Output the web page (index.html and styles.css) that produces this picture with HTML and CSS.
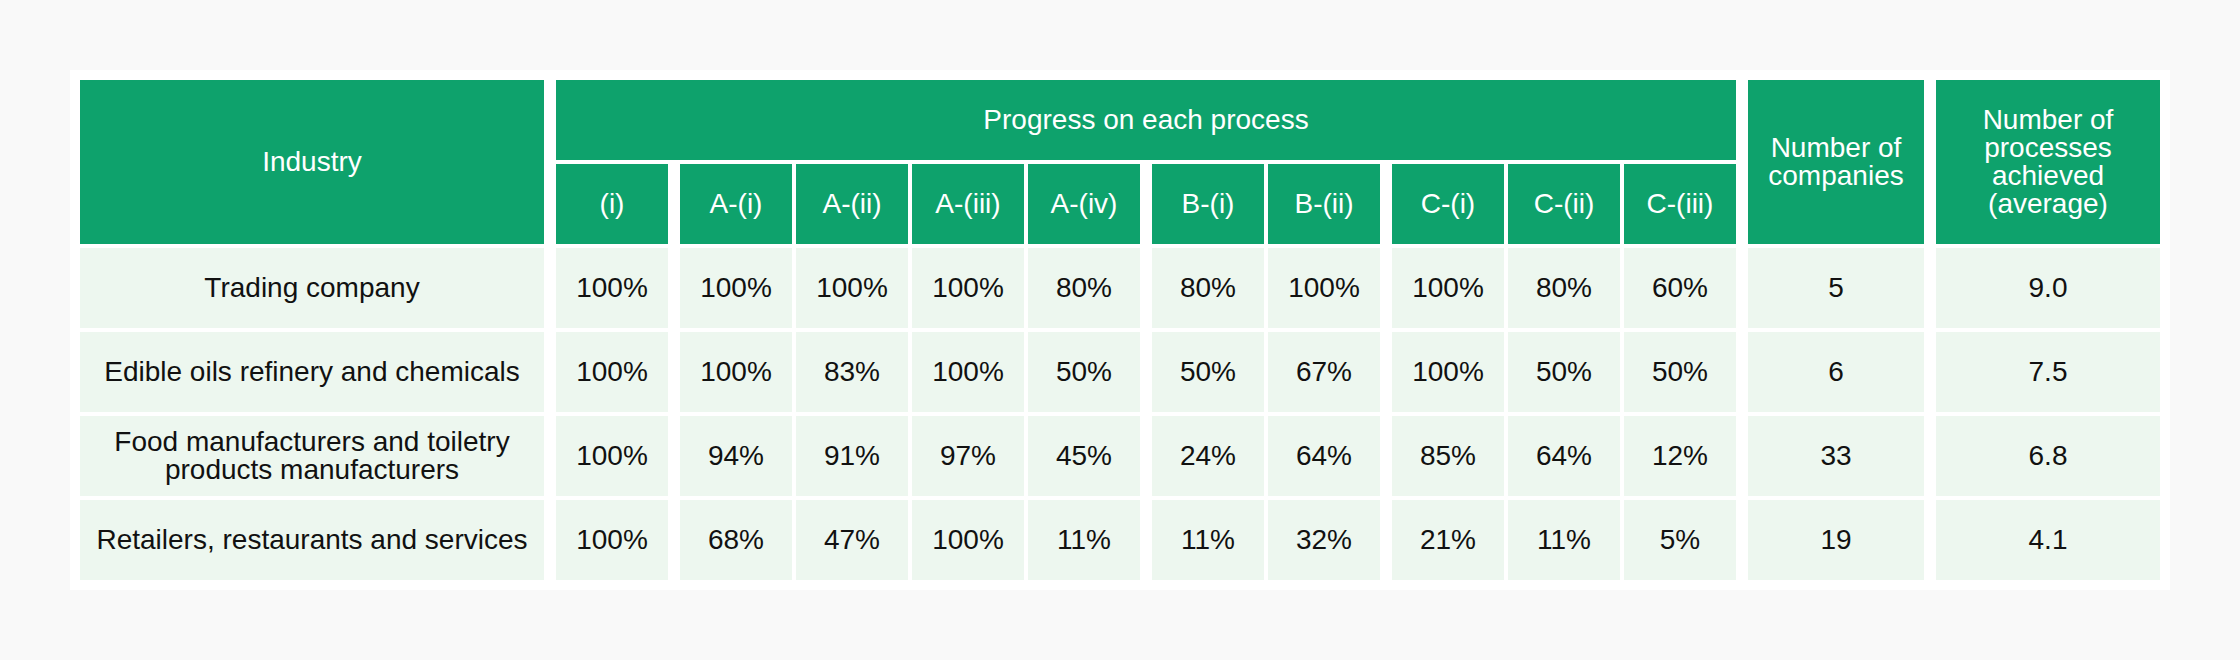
FILE: index.html
```html
<!DOCTYPE html>
<html lang="en">
<head>
<meta charset="utf-8">
<title>Progress on each process</title>
<link rel="stylesheet" href="styles.css">
</head>
<body>
<div class="panel">
  <div class="grid">
    <div class="cell head tall">Industry</div>
    <div class="cell head gs span-proc">Progress on each process</div>
    <div class="cell head gs tall">Number of<br>companies</div>
    <div class="cell head gs tall">Number of<br>processes<br>achieved<br>(average)</div>

    <div class="cell head gs">(i)</div>
    <div class="cell head gs">A-(i)</div>
    <div class="cell head">A-(ii)</div>
    <div class="cell head">A-(iii)</div>
    <div class="cell head">A-(iv)</div>
    <div class="cell head gs">B-(i)</div>
    <div class="cell head">B-(ii)</div>
    <div class="cell head gs">C-(i)</div>
    <div class="cell head">C-(ii)</div>
    <div class="cell head">C-(iii)</div>

    <div class="cell">Trading company</div>
    <div class="cell gs">100%</div>
    <div class="cell gs">100%</div>
    <div class="cell">100%</div>
    <div class="cell">100%</div>
    <div class="cell">80%</div>
    <div class="cell gs">80%</div>
    <div class="cell">100%</div>
    <div class="cell gs">100%</div>
    <div class="cell">80%</div>
    <div class="cell">60%</div>
    <div class="cell gs">5</div>
    <div class="cell gs">9.0</div>

    <div class="cell">Edible oils refinery and chemicals</div>
    <div class="cell gs">100%</div>
    <div class="cell gs">100%</div>
    <div class="cell">83%</div>
    <div class="cell">100%</div>
    <div class="cell">50%</div>
    <div class="cell gs">50%</div>
    <div class="cell">67%</div>
    <div class="cell gs">100%</div>
    <div class="cell">50%</div>
    <div class="cell">50%</div>
    <div class="cell gs">6</div>
    <div class="cell gs">7.5</div>

    <div class="cell">Food manufacturers and toiletry<br>products manufacturers</div>
    <div class="cell gs">100%</div>
    <div class="cell gs">94%</div>
    <div class="cell">91%</div>
    <div class="cell">97%</div>
    <div class="cell">45%</div>
    <div class="cell gs">24%</div>
    <div class="cell">64%</div>
    <div class="cell gs">85%</div>
    <div class="cell">64%</div>
    <div class="cell">12%</div>
    <div class="cell gs">33</div>
    <div class="cell gs">6.8</div>

    <div class="cell">Retailers, restaurants and services</div>
    <div class="cell gs">100%</div>
    <div class="cell gs">68%</div>
    <div class="cell">47%</div>
    <div class="cell">100%</div>
    <div class="cell">11%</div>
    <div class="cell gs">11%</div>
    <div class="cell">32%</div>
    <div class="cell gs">21%</div>
    <div class="cell">11%</div>
    <div class="cell">5%</div>
    <div class="cell gs">19</div>
    <div class="cell gs">4.1</div>
  </div>
</div>
</body>
</html>
```

FILE: styles.css
```css
html, body {
  margin: 0;
  padding: 0;
}

body {
  background: #f9f9f9;
  padding: 70px;
  font-family: "Liberation Sans", Arial, Helvetica, sans-serif;
}

.panel {
  background: #ffffff;
  padding: 10px;
  width: 2080px;
}

.grid {
  display: grid;
  grid-template-columns: 464px 120px 120px 112px 112px 112px 120px 112px 120px 112px 112px 184px 232px;
  grid-auto-rows: 80px;
  gap: 4px;
}

.cell {
  display: flex;
  align-items: center;
  justify-content: center;
  text-align: center;
  background: #edf7ef;
  color: #111111;
  font-size: 28px;
  line-height: 28px;
}

.cell.gs {
  margin-left: 8px;
}

.cell.head {
  background: #0ea26c;
  color: #ffffff;
}

.cell.tall {
  grid-row: span 2;
}

.cell.span-proc {
  grid-column: span 10;
}
```
